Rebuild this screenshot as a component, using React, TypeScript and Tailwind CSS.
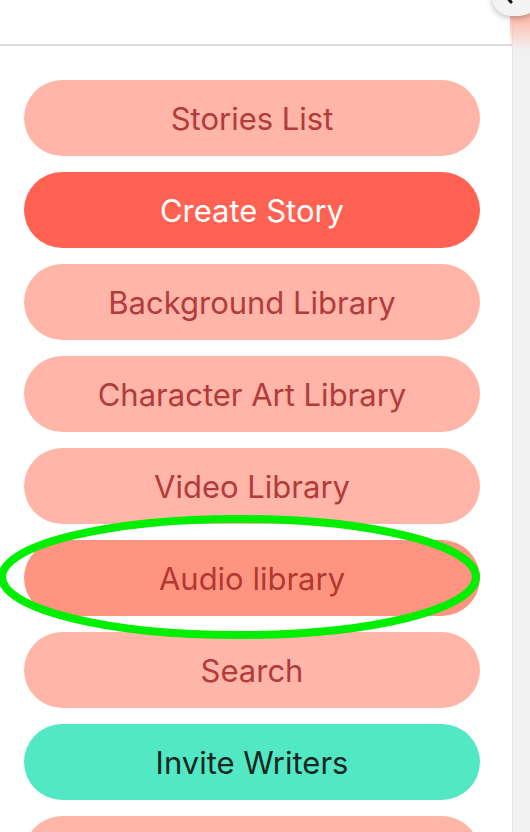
import React from 'react';

const items = [
  { label: 'Stories List', cls: 'bg-[#ffb5a7] text-[#b23b3b]' },
  { label: 'Create Story', cls: 'bg-[#ff6253] text-white' },
  { label: 'Background Library', cls: 'bg-[#ffb5a7] text-[#b23b3b]' },
  { label: 'Character Art Library', cls: 'bg-[#ffb5a7] text-[#b23b3b]' },
  { label: 'Video Library', cls: 'bg-[#ffb5a7] text-[#b23b3b]' },
  { label: 'Audio library', cls: 'bg-[#ff9581] text-[#b3382f]' },
  { label: 'Search', cls: 'bg-[#ffb5a7] text-[#b23b3b]' },
  { label: 'Invite Writers', cls: 'bg-[#52e8c4] text-[#152722]' },
  // next item is only peeking in at the bottom edge
  { label: '', cls: 'bg-[#ffb5a7] text-[#b23b3b]' },
];

export default function App() {
  return (
    <div
      className="relative w-[530px] h-[832px] overflow-hidden bg-white flex"
      style={{ fontFamily: 'Inter, "Noto Sans", sans-serif' }}
    >
      <div className="w-[512px] flex flex-col">
        {/* top bar */}
        <div className="h-[46px] shrink-0 border-b-2 border-[#dddddd]" />
        {/* menu */}
        <nav className="flex flex-col gap-4 pt-[34px] pl-6 w-[480px]">
          {items.map((item, i) => (
            <button
              key={i}
              className={`h-[76px] shrink-0 w-full rounded-full flex items-center justify-center text-[31px] leading-none ${item.cls}`}
            >
              {item.label}
            </button>
          ))}
        </nav>
      </div>

      {/* scrollbar strip */}
      <div className="w-[18px] bg-[#f1f1f1] border-l border-[#e6e6e6]" />

      {/* salmon peek behind the corner button */}
      <div className="absolute right-0 top-[14px] w-[20px] h-[36px] bg-gradient-to-b from-[#ffb3a3] to-[#ffb3a3]/0" />

      {/* corner round button */}
      <div className="absolute -top-[22px] -right-[8px] w-[46px] h-[38px] rounded-full bg-[#f4f4f4] shadow-[0_2px_6px_rgba(0,0,0,0.25)] flex items-end justify-center pb-[12px]">
        <svg width="10" height="10" viewBox="0 0 10 10" className="-ml-3">
          <path d="M1 1 L7 8" stroke="#111" strokeWidth="3" strokeLinecap="round" />
        </svg>
      </div>

      {/* highlight ring */}
      <svg className="absolute left-0 top-0 pointer-events-none" width="530" height="832">
        <ellipse cx="239" cy="577" rx="237" ry="58" fill="none" stroke="#00ee00" strokeWidth="8" />
      </svg>
    </div>
  );
}
